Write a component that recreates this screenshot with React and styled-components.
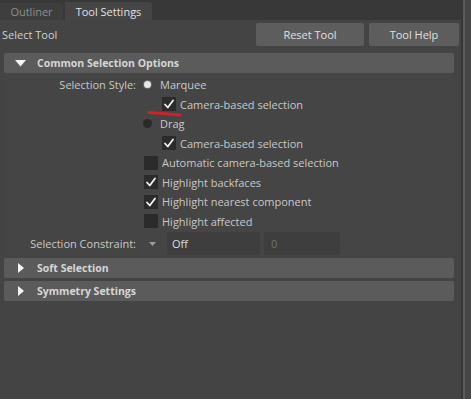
import React from 'react';
import styled, { createGlobalStyle } from 'styled-components';

const GlobalStyle = createGlobalStyle`
    body {
        margin: 0;
        background: #444;
        font-family: 'Open Sans', 'Noto Sans', sans-serif;
        font-size: 11px;
        color: #c8c8c8;
    }
`;

const Window = styled.div`
    position: relative;
    display: flex;
    width: 471px;
    height: 399px;
    overflow: hidden;
    background: #444;
`;

const Main = styled.div`
    display: flex;
    flex-direction: column;
    width: 461px;
`;

const SideStrip = styled.div`
    flex: 1;
    border-left: 2px solid #363636;
    box-shadow: inset 2px 0 0 #5a5a5a;
    background: #464646;
`;

const TabBar = styled.div`
    display: flex;
    align-items: flex-end;
    height: 20px;
    background: #383838;
    gap: 2px;
`;

const Tab = styled.div`
    display: flex;
    align-items: center;
    width: ${p => p.w}px;
    justify-content: center;
    height: ${p => (p.active ? 18 : 17)}px;
    border-radius: 0 3px 0 0;
    background: ${p => (p.active ? '#454545' : '#3e3e3e')};
    color: ${p => (p.active ? '#e2e2e2' : '#8e8e8e')};
    font-size: 11px;
`;

const Toolbar = styled.div`
    display: flex;
    align-items: center;
    height: 24px;
    margin: 2px 2px 7px 2px;
`;

const ToolName = styled.div`
    flex: 1;
    color: #d0d0d0;
    font-size: 11px;
`;

const Button = styled.div`
    display: flex;
    align-items: center;
    justify-content: center;
    width: ${p => p.w}px;
    height: 23px;
    margin-left: ${p => p.gap || 0}px;
    border-radius: 2px;
    background: #5d5d5d;
    color: #e0e0e0;
    font-size: 11px;
`;

const Frame = styled.div`
    width: 450px;
    margin: 0 0 ${p => p.after || 0}px 4px;
`;

const FrameHeader = styled.div`
    display: flex;
    align-items: center;
    height: 20px;
    border-radius: 2px;
    background: #5b5b5b;
    color: #d6d6d6;
    font-weight: bold;
    font-size: 10.5px;
`;

const Arrow = styled.div`
    width: 33px;
    display: flex;
    justify-content: center;
`;

const FrameBody = styled.div`
    padding-top: 2px;
    background: #454545;
`;

const Row = styled.div`
    display: grid;
    grid-template-columns: 140px 1fr;
    align-items: center;
    height: ${p => p.h || 19.5}px;
`;

const Label = styled.div`
    text-align: right;
    padding-right: 8px;
    color: #c8c8c8;
    white-space: nowrap;
`;

const Control = styled.div`
    display: flex;
    align-items: center;
    margin-left: ${p => p.indent || 0}px;
    white-space: nowrap;
`;

const RadioDot = styled.span`
    display: flex;
    align-items: center;
    justify-content: center;
    width: 9px;
    height: 9px;
    margin-right: 8px;
    &::after {
        content: '';
        width: ${p => (p.on ? 7 : 9)}px;
        height: ${p => (p.on ? 7 : 9)}px;
        border-radius: 50%;
        background: ${p => (p.on ? '#e6e6e6' : '#2a2a2a')};
        box-shadow: ${p => (p.on ? '0 0 0 1px #6a6a6a' : 'none')};
    }
`;

const Box = styled.span`
    display: flex;
    align-items: center;
    justify-content: center;
    width: 14px;
    height: 14px;
    margin-right: 4px;
    background: #2b2b2b;
`;

const Dropdown = styled.span`
    display: flex;
    align-items: center;
    width: 18px;
    padding-left: 5px;
`;

const Field = styled.div`
    display: flex;
    align-items: center;
    width: ${p => p.w}px;
    height: 23px;
    margin-right: 4px;
    padding-left: ${p => p.pad || 5}px;
    box-sizing: border-box;
    border-radius: 2px;
    background: #3e3e3e;
    color: ${p => (p.dim ? '#707070' : '#dcdcdc')};
`;

const Mark = styled.svg`
    position: absolute;
    left: 0;
    top: 0;
    pointer-events: none;
`;

const Check = () => (
    <svg width="12" height="12" viewBox="0 0 12 12">
        <path d="M2 6.5 L4.8 9.5 L10 2.5" fill="none" stroke="#f2f2f2" strokeWidth="1.8" strokeLinecap="round" strokeLinejoin="round" />
    </svg>
);

const Checkbox = ({ checked, children, indent }) => (
    <Control indent={indent}>
        <Box>{checked && <Check />}</Box>
        {children}
    </Control>
);

const Radio = ({ on, children }) => (
    <Control indent={-1}>
        <RadioDot on={on} />
        {children}
    </Control>
);

const Triangle = ({ open }) =>
    open ? (
        <svg width="11" height="7" viewBox="0 0 11 7">
            <path d="M0 0 H11 L5.5 6.5 Z" fill="#f4f4f4" />
        </svg>
    ) : (
        <svg width="6" height="10" viewBox="0 0 6 10">
            <path d="M0 0 L6 5 L0 10 Z" fill="#f4f4f4" />
        </svg>
    );

const App = () => {
    return (
        <>
            <GlobalStyle />
            <Window>
                <Main>
                    <TabBar>
                        <Tab w={63}>Outliner</Tab>
                        <Tab w={87} active>
                            Tool Settings
                        </Tab>
                    </TabBar>
                    <Toolbar>
                        <ToolName>Select Tool</ToolName>
                        <Button w={108}>Reset Tool</Button>
                        <Button w={90} gap={5}>
                            Tool Help
                        </Button>
                    </Toolbar>

                    <Frame after={2}>
                        <FrameHeader>
                            <Arrow>
                                <Triangle open />
                            </Arrow>
                            Common Selection Options
                        </FrameHeader>
                        <FrameBody>
                            <Row>
                                <Label>Selection Style:</Label>
                                <Radio on>Marquee</Radio>
                            </Row>
                            <Row>
                                <span />
                                <Checkbox checked indent={18}>
                                    Camera-based selection
                                </Checkbox>
                            </Row>
                            <Row>
                                <span />
                                <Radio>Drag</Radio>
                            </Row>
                            <Row>
                                <span />
                                <Checkbox checked indent={18}>
                                    Camera-based selection
                                </Checkbox>
                            </Row>
                            <Row>
                                <span />
                                <Checkbox>Automatic camera-based selection</Checkbox>
                            </Row>
                            <Row>
                                <span />
                                <Checkbox checked>Highlight backfaces</Checkbox>
                            </Row>
                            <Row>
                                <span />
                                <Checkbox checked>Highlight nearest component</Checkbox>
                            </Row>
                            <Row>
                                <span />
                                <Checkbox>Highlight affected</Checkbox>
                            </Row>
                            <Row h={25}>
                                <Label>Selection Constraint:</Label>
                                <Control>
                                    <Dropdown>
                                        <svg width="7" height="4" viewBox="0 0 7 4">
                                            <path d="M0 0 H7 L3.5 4 Z" fill="#9a9a9a" />
                                        </svg>
                                    </Dropdown>
                                    <Field w={93}>Off</Field>
                                    <Field w={76} pad={7} dim>
                                        0
                                    </Field>
                                </Control>
                            </Row>
                        </FrameBody>
                    </Frame>

                    <Frame after={3}>
                        <FrameHeader>
                            <Arrow>
                                <Triangle />
                            </Arrow>
                            Soft Selection
                        </FrameHeader>
                    </Frame>
                    <Frame>
                        <FrameHeader>
                            <Arrow>
                                <Triangle />
                            </Arrow>
                            Symmetry Settings
                        </FrameHeader>
                    </Frame>
                </Main>
                <SideStrip />
                <Mark width="471" height="399">
                    <path d="M149 112.5 Q165 113.5 180 115" fill="none" stroke="#d3202b" strokeWidth="3" strokeLinecap="round" />
                </Mark>
            </Window>
        </>
    );
};

export default App;
